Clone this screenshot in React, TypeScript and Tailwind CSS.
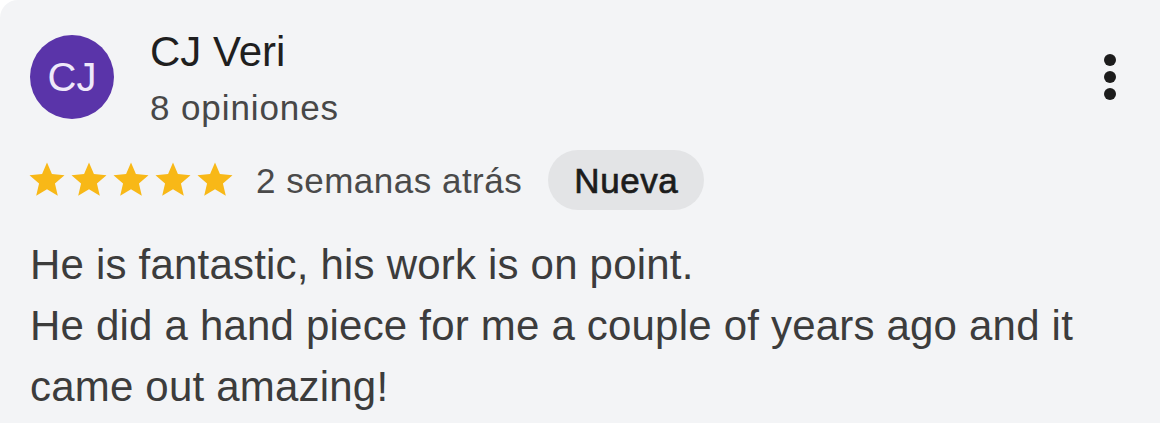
const Star = () => (
  <svg width={42} height={42} viewBox="0 0 24 24" className="shrink-0">
    <path
      d="M12 17.27L18.18 21l-1.64-7.03L22 9.24l-7.19-.61L12 2 9.19 8.63 2 9.24l5.46 4.73L5.82 21z"
      fill="#f8b817"
    />
  </svg>
);

const App = () => {
  return (
    <div className="min-h-screen w-full bg-white">
      <div
        className="h-[423px] w-[1160px] overflow-hidden rounded-tl-[18px] bg-[#f3f4f6] pl-[30px] pr-[44px]"
        style={{ fontFamily: '"Liberation Sans", Arial, sans-serif' }}
      >
        {/* header */}
        <div className="flex items-start pt-[27px]">
          <div className="mt-[8px] flex h-[84px] w-[84px] shrink-0 items-center justify-center rounded-full bg-[#5a34a9] text-[40px] leading-none text-[#efe9fa]">
            CJ
          </div>
          <div className="ml-[36px] flex flex-col">
            <span className="text-[42px] leading-[50px] text-[#1f1f1f]">CJ Veri</span>
            <span className="mt-[9px] text-[35px] leading-[44px] tracking-[0.9px] text-[#474747]">8 opiniones</span>
          </div>
          <div className="ml-auto mt-[27px] flex flex-col items-center gap-[5px]">
            <span className="block h-[12px] w-[12px] rounded-full bg-[#1c1c1c]" />
            <span className="block h-[12px] w-[12px] rounded-full bg-[#1c1c1c]" />
            <span className="block h-[12px] w-[12px] rounded-full bg-[#1c1c1c]" />
          </div>
        </div>

        {/* rating row */}
        <div className="mt-[20px] flex h-[60px] items-center">
          <div className="-ml-[4px] flex">
            <Star />
            <Star />
            <Star />
            <Star />
            <Star />
          </div>
          <span className="ml-[20px] text-[35px] leading-none tracking-[0.5px] text-[#4a4a4a]">2 semanas atrás</span>
          <span className="ml-[26px] flex h-[60px] items-center rounded-full bg-[#e3e4e6] px-[26px] text-[35px] leading-none tracking-[0.6px] text-[#1c1c1c] [-webkit-text-stroke:0.7px_#1c1c1c]">
            Nueva
          </span>
        </div>

        {/* body */}
        <p className="mt-[24px] text-[42px] leading-[61px] tracking-[0.2px] text-[#3c3c3c]">
          He is fantastic, his work is on point.
          <br />
          He did a hand piece for me a couple of years ago and it
          <br />
          came out amazing!
        </p>
      </div>
    </div>
  );
};

export default App;
